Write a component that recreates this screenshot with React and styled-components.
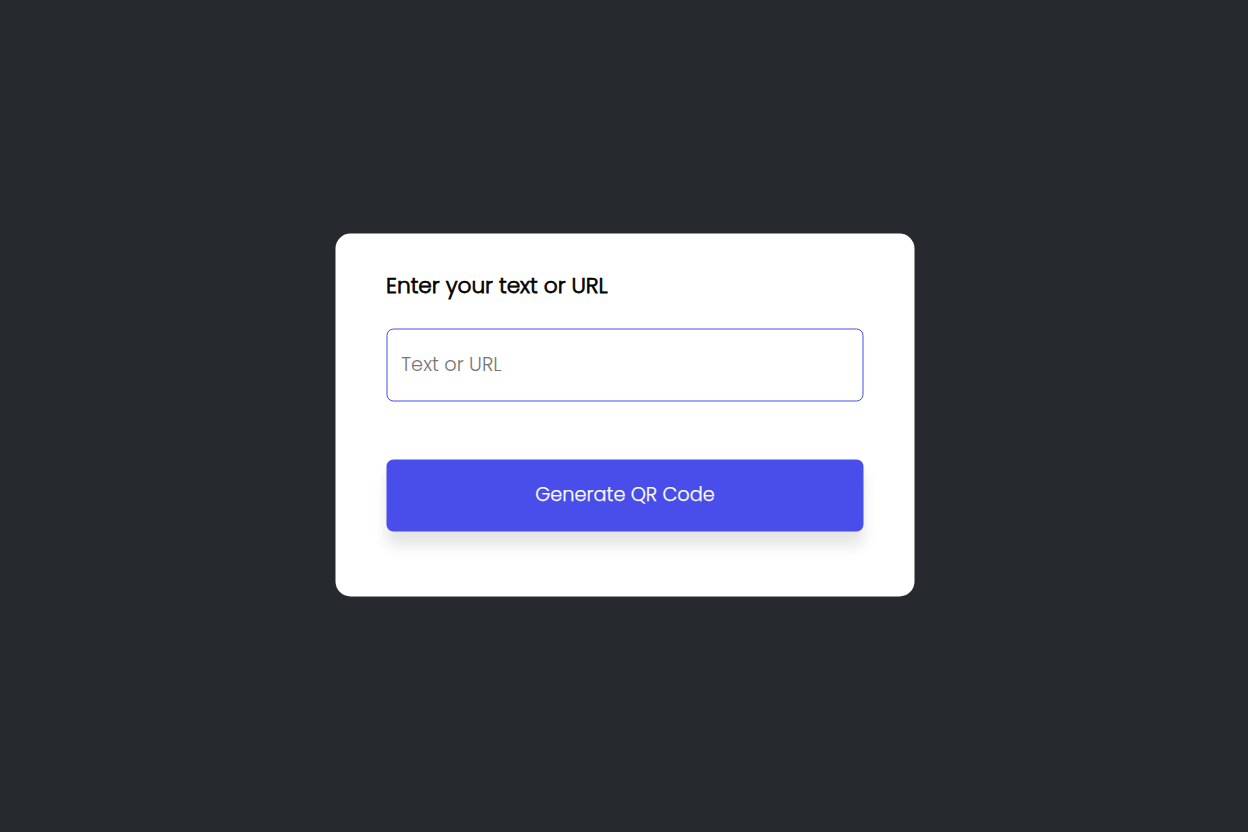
import React from "react";
import styled, { createGlobalStyle } from "styled-components";

const GlobalStyle = createGlobalStyle`
  * { box-sizing: border-box; margin: 0; padding: 0; }
  body { background: #262a2e; font-family: Poppins, Inter, "Open Sans", sans-serif; }
`;

const Page = styled.main`
  min-height: 100vh;
  display: flex;
  align-items: center;
  justify-content: center;
  padding: 0 0 2px 2px;
`;

const Card = styled.section`
  width: 579px;
  height: 363px;
  display: flex;
  flex-direction: column;
  padding: 35px 51px 0;
  background: #fff;
  border-radius: 15px;
  transform: translate(-0.5px, -0.5px);
`;

const Label = styled.label`
  height: 34px;
  line-height: 34px;
  font-size: 21.7px;
  font-weight: 300;
  -webkit-text-stroke: 0.75px #000;
  color: #000;
  white-space: nowrap;
`;

const TextInput = styled.input`
  width: 100%;
  height: 73px;
  margin-top: 26px;
  padding: 0 14px 2px;
  border: 1px solid #494eea;
  border-radius: 7px;
  outline: none;
  font: 300 19.4px Poppins, Inter, sans-serif;
  &::placeholder { color: #757575; }
`;

const Button = styled.button`
  width: 100%;
  height: 72px;
  margin-top: 58px;
  padding: 0 0 2px 1px;
  border: none;
  border-radius: 7px;
  background: #494eea;
  color: #fff;
  font: 300 19.3px Poppins, Inter, sans-serif;
  -webkit-text-stroke: 0.25px #fff;
  box-shadow: 0 14px 14px rgba(0, 0, 0, 0.1);
`;

export default function App() {
  return (
    <>
      <GlobalStyle />
      <Page>
        <Card>
          <Label htmlFor="qr-text">Enter your text or URL</Label>
          <TextInput id="qr-text" type="text" placeholder="Text or URL" />
          <Button type="button">Generate QR Code</Button>
        </Card>
      </Page>
    </>
  );
}
